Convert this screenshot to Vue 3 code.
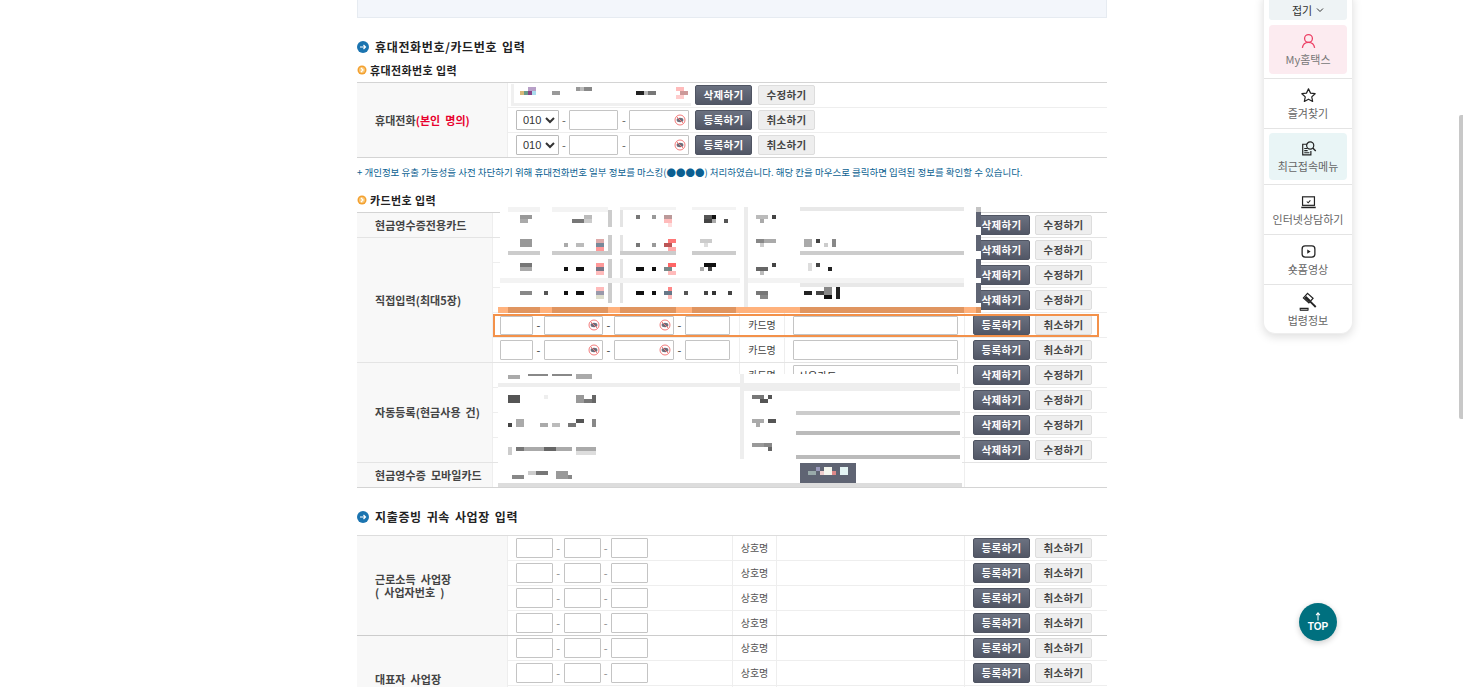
<script setup>
const phoneRows = [{ btn: '등록하기' }, { btn: '등록하기' }]
const blocks = [
  // phone mask
  [511,84,180,22,'#fff'],[511,84,3,22,'#f0f0f0'],[511,103,180,3,'#f0f0f0'],
  [520,91,4,4,'#d8b878'],[524,91,4,4,'#6a9a88'],[528,91,4,4,'#884488'],[532,91,4,4,'#aadcee'],[528,87,8,4,'#b8a0c8'],
  [552,91,8,4,'#999'],[576,87,4,4,'#999'],[580,87,4,4,'#bbb'],[584,87,8,4,'#888'],
  [636,91,8,4,'#222'],[644,91,4,4,'#bbb'],[648,91,8,4,'#777'],
  [676,87,8,4,'#fbb'],[680,91,8,4,'#c99'],[676,95,8,4,'#fcc'],
  // card mask 1
  [500,207,481,106,'#fff'],[508,207,32,5,'#f3f3f3'],[552,207,56,5,'#f3f3f3'],[620,207,56,3,'#f3f3f3'],[692,207,44,3,'#f3f3f3'],[800,207,164,4,'#e8e8e8'],
  [744,207,4,106,'#ececec'],[976,207,5,5,'#c4c4c4'],[976,212,5,15,'#5f6473'],[976,235,5,16,'#5f6473'],[976,259,5,19,'#5f6473'],[976,283,5,20,'#5f6473'],
  [608,210,4,17,'#ccc'],[620,210,3,17,'#e4e4e4'],[608,235,4,20,'#ccc'],[620,235,3,20,'#e4e4e4'],
  [608,259,4,20,'#ccc'],[620,259,3,20,'#e4e4e4'],[608,283,4,20,'#ccc'],[620,283,3,20,'#e4e4e4'],
  [508,251,32,4,'#ccc'],[552,251,56,4,'#ccc'],[620,251,56,4,'#ccc'],[692,251,44,4,'#ccc'],[800,251,164,4,'#ccc'],
  [500,278,240,5,'#f3f3f3'],[800,283,164,4,'#e8e8e8'],[748,278,216,5,'#f3f3f3'],
  [498,307,483,6,'#ffb27d'],[508,307,32,6,'#e09560'],[552,307,56,6,'#e09560'],[620,307,56,6,'#e09560'],[692,307,44,6,'#e09560'],[800,307,164,6,'#e09560'],[976,307,5,6,'#e09560'],
  [520,215,12,4,'#999'],[520,219,8,4,'#aaa'],[572,219,12,4,'#777'],[584,215,8,4,'#bbb'],[584,219,8,4,'#ccc'],
  [636,215,4,4,'#777'],[652,215,4,4,'#999'],[664,215,8,4,'#b99'],[664,219,8,4,'#fbb'],[668,223,4,4,'#fdd'],
  [704,215,8,4,'#555'],[712,215,4,4,'#111'],[704,219,8,4,'#444'],[712,219,4,4,'#aaa'],[724,219,4,4,'#555'],
  [756,215,12,4,'#bbb'],[760,219,4,4,'#aaa'],[772,215,4,4,'#444'],
  [520,239,12,8,'#999'],[564,243,4,4,'#aaa'],[576,243,8,4,'#bbb'],[596,239,8,4,'#daa'],[596,243,8,4,'#789'],[596,247,8,4,'#f99'],
  [636,243,4,4,'#777'],[652,243,4,4,'#999'],[668,239,8,4,'#f77'],[664,243,8,4,'#b55'],[668,247,8,4,'#faa'],[700,239,12,4,'#ccc'],[704,243,4,4,'#ddd'],
  [756,239,12,4,'#888'],[764,239,12,4,'#aaa'],[760,243,4,4,'#ccc'],[804,239,8,8,'#aaa'],[816,239,4,4,'#444'],[824,243,4,4,'#ccc'],[832,239,4,8,'#888'],
  [520,263,12,4,'#777'],[520,267,12,4,'#aaa'],[564,267,4,4,'#111'],[576,267,8,4,'#111'],[596,263,8,4,'#f99'],[596,267,8,4,'#778'],[596,271,8,4,'#fbb'],
  [636,267,8,4,'#111'],[652,267,4,4,'#111'],[668,263,8,4,'#f66'],[664,267,8,4,'#788'],[668,271,8,4,'#fbb'],[704,263,12,4,'#111'],[700,267,4,4,'#aaa'],[708,267,4,4,'#444'],
  [756,267,12,4,'#666'],[772,263,4,4,'#444'],[760,271,4,4,'#bbb'],[808,263,4,8,'#ddd'],[816,263,4,4,'#444'],[828,267,4,4,'#222'],
  [520,291,12,4,'#888'],[544,291,4,4,'#555'],[564,291,4,4,'#111'],[576,291,8,4,'#111'],[596,287,8,4,'#fbb'],[596,291,8,4,'#99a'],[596,295,8,4,'#ddc'],
  [636,291,8,4,'#111'],[652,291,4,4,'#111'],[668,287,4,4,'#f88'],[664,291,8,4,'#678'],[668,295,4,4,'#fbb'],[684,291,4,4,'#555'],[704,291,4,4,'#444'],[712,291,4,4,'#333'],[728,291,4,4,'#444'],
  [756,291,12,4,'#777'],[760,295,8,4,'#888'],[804,291,8,4,'#222'],[816,291,8,4,'#444'],[824,287,8,8,'#888'],[824,295,8,4,'#111'],[836,287,4,12,'#222'],
  // card mask 2
  [498,374,464,113,'#fff'],[498,383,242,4,'#eee'],[740,383,220,8,'#eee'],[740,374,4,85,'#eee'],
  [796,411,164,4,'#ccc'],[796,431,164,4,'#bbb'],[796,455,164,4,'#bbb'],[498,483,464,4,'#ddd'],
  [800,463,56,20,'#5f6473'],[808,471,8,4,'#9aa'],[816,467,4,4,'#99b'],[820,471,4,4,'#ecc'],[824,467,8,8,'#f4f6ee'],[832,471,4,4,'#d88'],[840,467,8,8,'#e4f4f4'],
  [508,375,12,4,'#aaa'],[528,374,20,2,'#888'],[552,374,20,2,'#888'],[576,374,16,5,'#aaa'],
  [508,395,12,8,'#555'],[544,395,4,4,'#eee'],[576,395,8,8,'#999'],[584,399,12,4,'#777'],[592,395,4,8,'#666'],
  [508,423,4,4,'#444'],[516,419,8,8,'#aaa'],[540,423,8,4,'#aaa'],[552,423,8,4,'#bbb'],[568,423,8,4,'#777'],[576,419,8,4,'#555'],[592,419,4,8,'#888'],
  [508,447,4,8,'#ccc'],[516,447,8,4,'#777'],[524,447,24,4,'#aaa'],[544,447,12,4,'#666'],[556,447,16,4,'#aaa'],[576,447,20,4,'#aaa'],[576,451,20,4,'#ddd'],
  [512,475,12,4,'#888'],[528,471,8,4,'#ccc'],[536,471,12,4,'#777'],[556,471,12,8,'#999'],[568,475,4,4,'#888'],
  [752,395,12,4,'#777'],[760,399,8,4,'#555'],[768,395,4,4,'#555'],[752,419,12,4,'#aaa'],[756,423,4,4,'#aaa'],[768,419,8,4,'#555'],[752,443,12,4,'#999'],[764,443,8,4,'#888'],[768,447,4,4,'#666'],
]
const rectStyle = (b) => ({ left: b[0] + 'px', top: b[1] + 'px', width: b[2] + 'px', height: b[3] + 'px', background: b[4] })
const cardGroups = [
  { label: '현금영수증전용카드', rows: [{ a: 1 }] },
  { label: '직접입력(최대5장)', rows: [{ a: 1 }, { a: 1 }, { a: 1 }, { n: 1, hl: 1 }, { n: 1 }] },
  { label: '자동등록(현금사용 건)', rows: [{ a: 1, v: '신용카드' }, { a: 1 }, { a: 1 }, { a: 1 }] },
  { label: '현금영수증 모바일카드', rows: [{ e: 1 }] },
]
const bizGroups = ['근로소득 사업장', '대표자 사업장']
</script>

<template>
  <div class="page">
    <main class="content">
      <div class="top-box"></div>

      <h2 class="h2">
        <svg class="bullet" viewBox="0 0 12 12"><circle cx="6" cy="6" r="6" fill="#1b74b0"/><path d="M3 6h5.5M6.5 4l2 2-2 2" stroke="#fff" stroke-width="1.2" fill="none"/></svg>
        휴대전화번호/카드번호 입력
      </h2>
      <h3 class="h3">
        <svg class="bullet-s" viewBox="0 0 10 10"><circle cx="5" cy="5" r="4.5" fill="#f3a02f"/><circle cx="5" cy="5" r="3" fill="#f9c777"/><path d="M4 3l2 2-2 2" stroke="#fff" stroke-width="1.2" fill="none"/></svg>
        휴대전화번호 입력
      </h3>

      <section class="tbl strong-end">
        <div class="th w150">
          <span>휴대전화<b class="red">(본인 명의)</b></span>
        </div>
        <div class="rows">
          <div class="row phone">
            <span class="phone-mask"></span>
            <button class="btn dark">삭제하기</button>
            <button class="btn light">수정하기</button>
          </div>
          <div v-for="(r, i) in phoneRows" :key="i" class="row phone">
            <select class="sel"><option>010</option></select>
            <span class="dash">-</span>
            <input class="ip w49" />
            <span class="dash">-</span>
            <span class="eye-wrap w60">
              <input class="ip full" />
              <svg class="eye" viewBox="0 0 12 12"><circle cx="6" cy="6" r="5" fill="#fff" stroke="#f47c7c" stroke-width="1"/><ellipse cx="6" cy="6" rx="3.4" ry="2.2" fill="#6d6d7a"/><path d="M2.5 2.5l7 7" stroke="#f47c7c" stroke-width="1"/></svg>
            </span>
            <button class="btn dark">{{ r.btn }}</button>
            <button class="btn light">취소하기</button>
          </div>
        </div>
      </section>

      <p class="notice">+ 개인정보 유출 가능성을 사전 차단하기 위해 휴대전화번호 일부 정보를 마스킹(●●●●) 처리하였습니다. 해당 칸을 마우스로 클릭하면 입력된 정보를 확인할 수 있습니다.</p>

      <h3 class="h3 card-h">
        <svg class="bullet-s" viewBox="0 0 10 10"><circle cx="5" cy="5" r="4.5" fill="#f3a02f"/><circle cx="5" cy="5" r="3" fill="#f9c777"/><path d="M4 3l2 2-2 2" stroke="#fff" stroke-width="1.2" fill="none"/></svg>
        카드번호 입력
      </h3>

      <section class="tbl-stack strong-end">
        <div v-for="g in cardGroups" :key="g.label" class="tbl group">
          <div class="th w135"><span>{{ g.label }}</span></div>
          <div class="rows">
            <div v-for="(r, i) in g.rows" :key="i" class="row card" :class="{ hl: r.hl }">
              <div class="c-num">
                <template v-if="r.n">
                  <input class="ip w33" />
                  <span class="dash2">-</span>
                  <span class="eye-wrap w59">
                    <input class="ip full" />
                    <svg class="eye" viewBox="0 0 12 12"><circle cx="6" cy="6" r="5" fill="#fff" stroke="#f47c7c" stroke-width="1"/><ellipse cx="6" cy="6" rx="3.4" ry="2.2" fill="#6d6d7a"/><path d="M2.5 2.5l7 7" stroke="#f47c7c" stroke-width="1"/></svg>
                  </span>
                  <span class="dash2">-</span>
                  <span class="eye-wrap w60b">
                    <input class="ip full" />
                    <svg class="eye" viewBox="0 0 12 12"><circle cx="6" cy="6" r="5" fill="#fff" stroke="#f47c7c" stroke-width="1"/><ellipse cx="6" cy="6" rx="3.4" ry="2.2" fill="#6d6d7a"/><path d="M2.5 2.5l7 7" stroke="#f47c7c" stroke-width="1"/></svg>
                  </span>
                  <span class="dash2">-</span>
                  <input class="ip w45" />
                </template>
              </div>
              <div class="c-name">카드명</div>
              <div class="c-val"><input v-if="!r.e" class="ip card-name" :value="r.v || ''" /></div>
              <div v-if="!r.e" class="c-btn">
                <button class="btn dark">{{ r.n ? '등록하기' : '삭제하기' }}</button>
                <button class="btn light">{{ r.n ? '취소하기' : '수정하기' }}</button>
              </div>
            </div>
          </div>
        </div>
      </section>

      <h2 class="h2 biz-h">
        <svg class="bullet" viewBox="0 0 12 12"><circle cx="6" cy="6" r="6" fill="#1b74b0"/><path d="M3 6h5.5M6.5 4l2 2-2 2" stroke="#fff" stroke-width="1.2" fill="none"/></svg>
        지출증빙 귀속 사업장 입력
      </h2>

      <section class="tbl-stack biz-table">
        <div v-for="g in bizGroups" :key="g" class="tbl biz-group">
          <div class="th w150"><span>{{ g }}<br />( 사업자번호 )</span></div>
          <div class="rows">
            <div v-for="i in 4" :key="i" class="row biz">
              <div class="b-num">
                <input class="ip w37" /><span class="dash3">-</span><input class="ip w37" /><span class="dash3">-</span><input class="ip w37" />
              </div>
              <div class="b-name">상호명</div>
              <div class="b-val"></div>
              <div class="c-btn">
                <button class="btn dark">등록하기</button>
                <button class="btn light">취소하기</button>
              </div>
            </div>
          </div>
        </div>
      </section>
    </main>

    <div class="mask-layer" aria-hidden="true">
      <i v-for="(b, i) in blocks" :key="i" class="px" :style="rectStyle(b)"></i>
      <span class="pick"></span>
    </div>

    <aside class="side">
      <div class="fold">접기 <svg viewBox="0 0 8 8" class="chev"><path d="M1 2.5l3 3 3-3" stroke="#333" stroke-width="1" fill="none"/></svg></div>
      <div class="s-item boxed pink">
        <svg viewBox="0 0 20 20" class="s-ic"><circle cx="10" cy="6.5" r="4.6" fill="none" stroke="#ec3f64" stroke-width="1.5"/><path d="M2.8 17.5c.6-4.2 3.4-6.6 7.2-6.6s6.6 2.4 7.2 6.6" fill="none" stroke="#ec3f64" stroke-width="1.5"/></svg>
        <span>My홈택스</span>
      </div>
      <div class="s-item sep">
        <svg viewBox="0 0 20 20" class="s-ic"><path d="M10 2.2l2.4 5 5.4.7-4 3.7 1.1 5.4-4.9-2.7-4.9 2.7 1.1-5.4-4-3.7 5.4-.7z" fill="none" stroke="#222" stroke-width="1.4" stroke-linejoin="round"/></svg>
        <span>즐겨찾기</span>
      </div>
      <div class="s-item boxed teal sep">
        <svg viewBox="0 0 20 20" class="s-ic"><path d="M9 5H3.2v12.5h9.6V13" fill="none" stroke="#222" stroke-width="1.4"/><path d="M5 10h4M5 12.5h4M5 15h6" stroke="#222" stroke-width="1.2"/><circle cx="12" cy="6.5" r="4.2" fill="#e9f5f6" stroke="#222" stroke-width="1.4"/><path d="M15 9.5l3.5 3.5" stroke="#222" stroke-width="1.6"/></svg>
        <span>최근접속메뉴</span>
      </div>
      <div class="s-item sep">
        <svg viewBox="0 0 20 20" class="s-ic"><rect x="3" y="4.5" width="14" height="10" fill="none" stroke="#222" stroke-width="1.4"/><path d="M1.5 17h17" stroke="#222" stroke-width="1.8"/><path d="M8 10l1.6 1.6 2.6-3" fill="none" stroke="#222" stroke-width="1.2"/></svg>
        <span>인터넷상담하기</span>
      </div>
      <div class="s-item sep">
        <svg viewBox="0 0 20 20" class="s-ic"><rect x="2.5" y="3.5" width="15" height="13" rx="3.5" fill="none" stroke="#222" stroke-width="1.5"/><path d="M8.5 7.5l4 2.5-4 2.5z" fill="#222"/></svg>
        <span>숏폼영상</span>
      </div>
      <div class="s-item sep last">
        <svg viewBox="0 0 22 22" class="s-ic big"><path d="M10.5 1.5l6 5.5-4.5 5-6-5.5z" fill="none" stroke="#222" stroke-width="1.4"/><path d="M9 4.5l5 4.6-2 2.2-5-4.6z" fill="#222"/><path d="M13 10l6.5 6.5" stroke="#222" stroke-width="2"/><path d="M2.5 19.5v-1.6h8.5v1.6" fill="none" stroke="#222" stroke-width="1.4"/><path d="M2 20h9.5" stroke="#222" stroke-width="1.4"/></svg>
        <span>법령정보</span>
      </div>
    </aside>

    <div class="scroll-thumb"></div>

    <div class="top-btn">
      <svg viewBox="0 0 10 12" class="top-arrow"><path d="M5 11V2M2.6 4.2L5 1.5l2.4 2.7" stroke="#fff" stroke-width="1.3" fill="none"/></svg>
      <span>TOP</span>
    </div>
  </div>
</template>

<style>
html, body { margin: 0; height: 100%; overflow: hidden; background: #fff; }
</style>

<style scoped>
.page {
  position: relative;
  width: 1463px;
  height: 687px;
  overflow: hidden;
  background: #fff;
  font-family: "Noto Sans CJK KR", "Noto Sans", sans-serif;
  color: #333;
}
.content { width: 750px; margin-left: 357px; }
.top-box { height: 17px; background: #f3f6fb; border: 1px solid #e6ebf1; border-top: 0; }

.h2 {
  display: flex; align-items: center; gap: 6px;
  height: 16px; margin: 21px 0 0;
  font-size: 12px; font-weight: 700; letter-spacing: .65px; word-spacing: 1.5px; color: #222; line-height: 16px;
}
.bullet { width: 12px; height: 12px; flex: none; }
.bullet-s { width: 10px; height: 10px; flex: none; }
.h3 {
  display: flex; align-items: center; gap: 3px;
  height: 14px; margin: 8px 0 5px;
  font-size: 11px; font-weight: 700; letter-spacing: .4px; color: #222; line-height: 14px;
}
.notice {
  height: 14px; margin: 7px 0 0;
  font-size: 9.5px; line-height: 14px; color: #0b5f91; white-space: nowrap;
}
.card-h { margin-top: 14px; }
.biz-h { margin-top: 21px; margin-bottom: 10px; }

.tbl { display: flex; }
.strong-end { border-top: 1px solid #d4d4d4; border-bottom: 1px solid #d4d4d4; }
.th {
  flex: none; display: flex; align-items: center;
  padding-left: 18px; box-sizing: border-box;
  background: #f8f8f8; border-right: 1px solid #eee;
  font-size: 11px; font-weight: 700; letter-spacing: .05px; word-spacing: 2.5px; line-height: 13px; color: #444;
}
.w150 { width: 151px; }
.w135 { width: 136px; }
.red { color: #e8002d; font-weight: 700; }
.rows { flex: 1; min-width: 0; }
.row { height: 24px; display: flex; align-items: center; border-bottom: 1px solid #eee; box-sizing: content-box; }
.rows .row:last-child { border-bottom: 0; }
.phone { padding-left: 8px; }
.phone-mask { width: 179px; flex: none; }
.group + .group { border-top: 1px solid #e4e4e4; }

.sel {
  width: 43px; height: 20px; flex: none; box-sizing: border-box;
  padding: 0 0 0 2px; border: 1px solid #bbb; background: #fff; border-radius: 1px;
  font: 11px "Liberation Sans", sans-serif; color: #333;
}
.ip {
  display: block; box-sizing: border-box; height: 20px; padding: 0;
  border: 1px solid #c4c4c4; background: #fff; outline: 0; flex: none; border-radius: 1px;
}
.hl .c-num .ip { height: 19px; margin-top: 1px; }
.hl .c-val .ip { height: 19px; margin-top: 1px; }
.full { width: 100%; }
.w49 { width: 49px; margin-right: 1px; }
.w33 { width: 33px; }
.w45 { width: 45px; }
.w37 { width: 37px; }
.eye-wrap { position: relative; display: block; flex: none; }
.w60 { width: 60px; margin-right: 6px; }
.w59 { width: 59px; }
.w60b { width: 60px; }
.eye { position: absolute; right: 3px; top: 4px; width: 12px; height: 12px; }
.dash { width: 10px; text-align: center; font-size: 11px; color: #555; flex: none; }
.dash2 { width: 11px; text-align: center; font-size: 11px; color: #333; flex: none; }
.dash3 { width: 10.5px; text-align: center; font-size: 11px; color: #888; flex: none; }

.btn {
  width: 57px; height: 20px; flex: none; padding: 0; border-radius: 2px;
  font: 700 10.5px/18px "Noto Sans CJK KR", sans-serif; letter-spacing: .3px; cursor: pointer;
}
.dark { border: 1px solid #4f5462; background: linear-gradient(#6b7180, #525766); color: #fff; }
.light { margin-left: 5px; border: 1px solid #ddd; background: #eee; color: #444; }
.phone .light { margin-left: 6px; }

.c-num { width: 247px; flex: none; display: flex; align-items: center; padding-left: 7px; box-sizing: border-box; border-right: 1px solid #eee; align-self: stretch; }
.c-name { width: 45px; flex: none; text-align: center; font-size: 10px; color: #444; border-right: 1px solid #eee; align-self: stretch; line-height: 24px; box-sizing: border-box; }
.c-val { width: 180px; flex: none; display: flex; align-items: center; padding-left: 8px; box-sizing: border-box; border-right: 1px solid #eee; align-self: stretch; }
.card-name { width: 165px; padding-left: 4px; font: 10.5px "Noto Sans CJK KR", sans-serif; color: #333; }
.c-btn { display: flex; align-items: center; padding-left: 8px; }

.biz-table { border-top: 1px solid #ddd; }
.biz-group + .biz-group { border-top: 1px solid #ccc; }
.b-num { width: 225px; flex: none; display: flex; align-items: center; padding-left: 8px; box-sizing: border-box; border-right: 1px solid #eee; align-self: stretch; }
.b-name { width: 44px; flex: none; text-align: center; font-size: 10px; color: #555; border-right: 1px solid #eee; align-self: stretch; line-height: 24px; box-sizing: border-box; }
.b-val { width: 188px; flex: none; border-right: 1px solid #eee; align-self: stretch; box-sizing: border-box; }

.mask-layer { position: absolute; left: 0; top: 0; width: 0; height: 0; }
.px { position: absolute; display: block; }
.pick { position: absolute; left: 493px; top: 314px; width: 606px; height: 23px; box-sizing: border-box; border: 2px solid #f3914a; }

.side {
  position: absolute; left: 1263px; top: -5px; width: 90px; height: 339px; box-sizing: border-box;
  background: #fff; border: 1px solid #eee; border-top: 0; border-radius: 0 0 12px 12px;
  box-shadow: 0 3px 10px rgba(0,0,0,.13);
  display: flex; flex-direction: column; align-items: stretch;
}
.fold {
  margin: 0 5px; height: 25px; box-sizing: border-box; padding-top: 4px;
  display: flex; align-items: center; justify-content: center; gap: 4px;
  background: #eef3f5; border-radius: 0 0 3px 3px; font-size: 11px; color: #333;
}
.chev { width: 8px; height: 8px; }
.s-item {
  display: flex; flex-direction: column; align-items: center; justify-content: center;
  height: 50px; font-size: 11px; line-height: 14px; color: #666; gap: 2px; flex: none;
}
.boxed { margin: 5px 5px 4px; height: 49px; border-radius: 4px; }
.pink { background: #fcebf0; color: #777; }
.teal { background: #e9f5f6; height: 47px; }
.sep { border-top: 1px solid #e4e4e4; box-sizing: border-box; }
.boxed.sep { border-top: 0; position: relative; }
.boxed.sep::before { content: ""; position: absolute; left: -5px; right: -5px; top: -5px; height: 1px; background: #e4e4e4; }
.s-ic { width: 17px; height: 17px; flex: none; }
.s-ic.big { width: 20px; height: 20px; }
.s-item.last { height: 49px; gap: 1px; }

.scroll-thumb { position: absolute; right: 0; top: 115px; width: 4px; height: 304px; background: #c8c8c8; border-radius: 2px 0 0 2px; }

.top-btn {
  position: absolute; left: 1299px; top: 603px; width: 38px; height: 38px; border-radius: 50%;
  background: #00707f; box-shadow: 0 2px 6px rgba(0,0,0,.2); color: #fff;
  display: flex; flex-direction: column; align-items: center; justify-content: center;
  font: 700 10px/10px "Liberation Sans", sans-serif;
}
.top-arrow { width: 8px; height: 11px; margin-top: -2px; }
</style>
